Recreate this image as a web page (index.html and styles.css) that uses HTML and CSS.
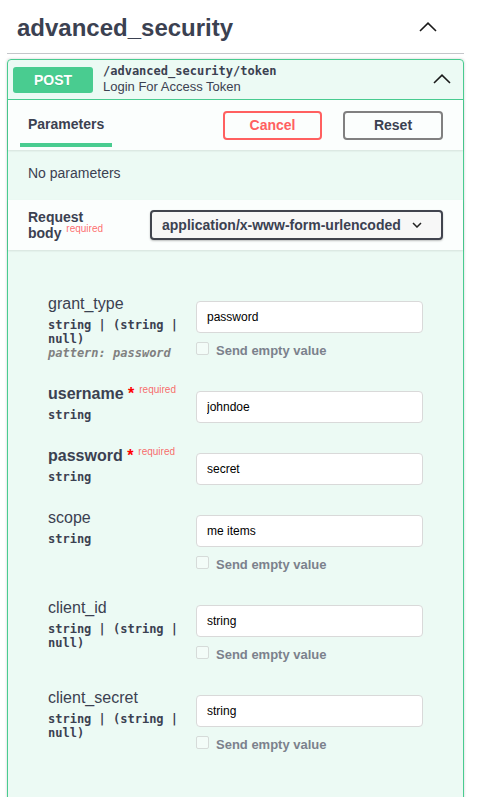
FILE: index.html
```html
<!DOCTYPE html>
<html lang="en">
<head>
    <meta charset="UTF-8">
    <meta name="viewport" content="width=device-width, initial-scale=1.0">
    <title>advanced_security</title>
    <link rel="stylesheet" href="styles.css">
</head>
<body>
    <div class="wrapper">
        <h3 class="tag">
            <span>advanced_security</span>
            <svg class="arrow tag-arrow" width="18" height="10" viewBox="0 0 18 10"><polyline points="1,9 9,1.2 17,9" /></svg>
        </h3>

        <div class="opblock">
            <div class="opblock-summary">
                <span class="method">POST</span>
                <div class="summary-text">
                    <div class="path">/advanced_security/token</div>
                    <div class="description">Login For Access Token</div>
                </div>
                <svg class="arrow op-arrow" width="18" height="10" viewBox="0 0 18 10"><polyline points="1,9 9,1.2 17,9" /></svg>
            </div>

            <div class="section-header tabs-header">
                <div class="tab">Parameters</div>
                <button class="btn cancel">Cancel</button>
                <button class="btn reset">Reset</button>
            </div>

            <div class="no-params">No parameters</div>

            <div class="section-header">
                <div class="body-title-wrap">
                    <h4 class="body-title">Request body <span class="req-label">required</span></h4>
                </div>
                <div class="content-type">
                    <span>application/x-www-form-urlencoded</span>
                    <svg width="10" height="6" viewBox="0 0 10 6"><polyline points="1,1 5,5 9,1" /></svg>
                </div>
            </div>

            <div class="params">
                <div class="param-row">
                    <div class="param-name-col">
                        <div class="param-name">grant_type</div>
                        <div class="param-type">string | (string | null)</div>
                        <div class="param-pattern">pattern: password</div>
                    </div>
                    <div class="param-value-col">
                        <input class="param-input" type="text" value="password">
                        <label class="empty-toggle"><span class="checkbox"></span><span>Send empty value</span></label>
                    </div>
                </div>

                <div class="param-row">
                    <div class="param-name-col">
                        <div class="param-name required">username<span class="star">&nbsp;*</span><span class="req-label">required</span></div>
                        <div class="param-type">string</div>
                    </div>
                    <div class="param-value-col">
                        <input class="param-input" type="text" value="johndoe">
                    </div>
                </div>

                <div class="param-row">
                    <div class="param-name-col">
                        <div class="param-name required">password<span class="star">&nbsp;*</span><span class="req-label">required</span></div>
                        <div class="param-type">string</div>
                    </div>
                    <div class="param-value-col">
                        <input class="param-input" type="text" value="secret">
                    </div>
                </div>

                <div class="param-row">
                    <div class="param-name-col">
                        <div class="param-name">scope</div>
                        <div class="param-type">string</div>
                    </div>
                    <div class="param-value-col">
                        <input class="param-input" type="text" value="me items">
                        <label class="empty-toggle"><span class="checkbox"></span><span>Send empty value</span></label>
                    </div>
                </div>

                <div class="param-row">
                    <div class="param-name-col">
                        <div class="param-name">client_id</div>
                        <div class="param-type">string | (string | null)</div>
                    </div>
                    <div class="param-value-col">
                        <input class="param-input" type="text" value="string">
                        <label class="empty-toggle"><span class="checkbox"></span><span>Send empty value</span></label>
                    </div>
                </div>

                <div class="param-row">
                    <div class="param-name-col">
                        <div class="param-name">client_secret</div>
                        <div class="param-type">string | (string | null)</div>
                    </div>
                    <div class="param-value-col">
                        <input class="param-input" type="text" value="string">
                        <label class="empty-toggle"><span class="checkbox"></span><span>Send empty value</span></label>
                    </div>
                </div>
            </div>
        </div>
    </div>
</body>
</html>
```

FILE: styles.css
```css
body {
    margin: 0;
    font-family: 'Liberation Sans', Arial, sans-serif;
    color: #3b4151;
    background-color: white;
}
.wrapper {
    padding: 0 18px 0 7px;
}
.tag {
    display: flex;
    align-items: center;
    margin: 0 0 5px;
    padding: 12px 27px 9px 10px;
    font-size: 24px;
    line-height: 32px;
    font-weight: bold;
    border-bottom: 1px solid rgba(59, 65, 81, 0.3);
}
.tag span {
    flex: 1;
}
.arrow polyline {
    fill: none;
    stroke: #1a1a1a;
    stroke-width: 1.6;
}
.tag-arrow {
    margin-top: -3px;
}
.opblock {
    border: 1px solid #49cc90;
    border-radius: 4px;
    background-color: rgba(73, 204, 144, 0.1);
    box-shadow: 0 0 3px rgba(0, 0, 0, 0.19);
    padding-bottom: 60px;
}
.opblock-summary {
    display: flex;
    align-items: center;
    height: 39px;
    padding: 0 12px 0 5px;
    border-bottom: 1px solid #49cc90;
}
.method {
    width: 80px;
    height: 26px;
    line-height: 26px;
    text-align: center;
    background-color: #49cc90;
    color: white;
    font-size: 14px;
    font-weight: bold;
    border-radius: 3px;
    text-shadow: 0 1px 0 rgba(0, 0, 0, 0.1);
}
.summary-text {
    flex: 1;
    padding-left: 10px;
    margin-top: -2px;
}
.path {
    font-family: 'DejaVu Sans Mono', monospace;
    font-size: 12px;
    font-weight: bold;
    line-height: 15px;
}
.description {
    font-size: 13px;
    line-height: 15px;
}
.op-arrow {
    margin-top: -1px;
}
.section-header {
    display: flex;
    align-items: center;
    height: 50px;
    padding: 0 20px;
    background-color: rgba(255, 255, 255, 0.8);
    box-shadow: 0 1px 2px rgba(0, 0, 0, 0.1);
}
.tabs-header {
    padding-left: 12px;
}
.tab {
    align-self: flex-start;
    padding: 16px 8px 10px;
    font-size: 14px;
    line-height: 17px;
    font-weight: bold;
    border-bottom: 4px solid #49cc90;
}
.btn {
    height: 29px;
    border: 2px solid #808080;
    border-radius: 4px;
    background: transparent;
    font-family: inherit;
    font-size: 14px;
    font-weight: bold;
    color: #3b4151;
    padding: 0;
}
.cancel {
    margin-left: auto;
    width: 99px;
    border-color: #ff6060;
    color: #ff6060;
}
.reset {
    width: 100px;
    margin-left: 21px;
}
.no-params {
    padding: 15px 20px 19px;
    font-size: 14px;
    line-height: 16px;
}
.body-title-wrap {
    flex: 1;
}
.body-title {
    width: 88px;
    margin: 0;
    font-size: 14px;
    line-height: 16px;
    font-weight: bold;
}
.req-label {
    position: relative;
    top: -6px;
    padding: 0 5px;
    font-size: 10px;
    line-height: 1;
    font-weight: normal;
    white-space: nowrap;
    color: rgba(255, 0, 0, 0.6);
}
.body-title .req-label {
    padding: 0 0 0 1px;
}
.content-type {
    display: flex;
    align-items: center;
    justify-content: space-between;
    width: 293px;
    height: 30px;
    box-sizing: border-box;
    padding: 0 19px 0 10px;
    border: 2px solid #41444e;
    border-radius: 4px;
    background-color: #f7f7f7;
    box-shadow: 0 1px 2px rgba(0, 0, 0, 0.25);
    font-size: 14px;
    font-weight: bold;
}
.content-type polyline {
    fill: none;
    stroke: #222;
    stroke-width: 1.5;
}
.params {
    padding: 44px 0 0 40px;
}
.param-row {
    display: flex;
    padding-bottom: 23px;
}
.param-name-col {
    width: 148px;
}
.param-name {
    height: 20px;
    font-size: 16px;
    line-height: 20px;
    white-space: nowrap;
}
.param-name.required {
    font-weight: bold;
}
.star {
    color: red;
}
.param-type {
    padding-top: 4px;
    width: 134px;
    font-family: 'DejaVu Sans Mono', monospace;
    font-size: 12px;
    line-height: 14px;
    font-weight: bold;
}
.param-pattern {
    font-family: 'DejaVu Sans Mono', monospace;
    font-size: 12px;
    line-height: 14px;
    font-weight: bold;
    font-style: italic;
    color: #808080;
}
.param-value-col {
    padding-top: 7px;
}
.param-input {
    display: block;
    width: 227px;
    height: 32px;
    box-sizing: border-box;
    margin: 0;
    padding: 0 10px;
    border: 1px solid #d9d9d9;
    border-radius: 4px;
    background-color: white;
    font-family: inherit;
    font-size: 12px;
    color: #000;
}
.empty-toggle {
    display: flex;
    align-items: flex-start;
    gap: 7px;
    margin-top: 9px;
    height: 19px;
    font-size: 13px;
    font-weight: bold;
    color: #7b818c;
}
.empty-toggle span:last-child {
    margin-top: 1px;
    line-height: 16px;
}
.checkbox {
    width: 13px;
    height: 13px;
    box-sizing: border-box;
    border: 1px solid #d6dbd9;
    border-radius: 2px;
    background-color: rgba(255, 255, 255, 0.4);
}
```
